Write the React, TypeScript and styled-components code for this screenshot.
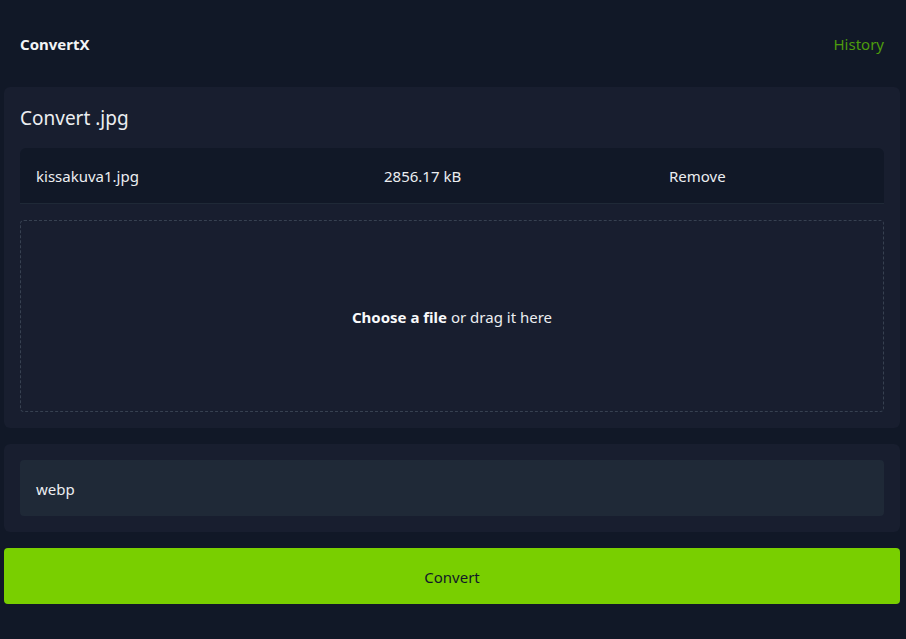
import { createGlobalStyle } from 'styled-components';
import styled from 'styled-components';

const GlobalStyle = createGlobalStyle`
  html, body {
    margin: 0;
    padding: 0;
    background: #111827;
  }
  body {
    font-family: "Noto Sans", "Open Sans", sans-serif;
    color: #e5e7eb;
    font-size: 16px;
  }
  * { box-sizing: border-box; }
`;

const Page = styled.div`
  min-height: 639px;
  background: #111827;
`;

const Header = styled.header`
  display: flex;
  align-items: center;
  justify-content: space-between;
  height: 87px;
  padding: 1px 22px 0 20px;
`;

const Brand = styled.span`
  font-weight: 700;
  font-size: 15px;
  color: #f3f4f6;
`;

const NavLink = styled.a`
  color: #4d9c0d;
  font-size: 15px;
  text-decoration: none;
`;

const Main = styled.main`
  display: flex;
  flex-direction: column;
  gap: 16px;
  padding: 0 6px 0 4px;
`;

const Panel = styled.section`
  background: #181e2f;
  border-radius: 6px;
  padding: 16px;
  display: flex;
  flex-direction: column;
  gap: 16px;
`;

const Title = styled.h1`
  margin: 0;
  padding-top: 2px;
  font-size: 19px;
  font-weight: 400;
  line-height: 27px;
  color: #eceef1;
`;

const FileTable = styled.div`
  background: #111827;
  border-radius: 6px 6px 0 0;
  border-bottom: 1px solid #1f2937;
  display: grid;
  grid-template-columns: 348px 285px 1fr;
  height: 56px;
  align-items: center;
  padding-top: 1px;
`;

const Cell = styled.div`
  padding: 0 16px;
  color: #eceef1;
  font-size: 15px;
`;

const DropZone = styled.div`
  height: 192px;
  border: 1px dashed #374151;
  border-radius: 4px;
  display: flex;
  align-items: center;
  justify-content: center;
  font-size: 15px;
  color: #eceef1;
  padding-top: 1px;
`;

const Strong = styled.b`
  font-weight: 700;
  color: #f9fafb;
`;

const Select = styled.div`
  height: 56px;
  background: #1f2937;
  border-radius: 4px;
  display: flex;
  align-items: center;
  padding: 2px 16px 0;
  font-size: 15px;
  color: #eceef1;
`;

const ConvertButton = styled.button`
  height: 56px;
  width: 100%;
  border: none;
  border-radius: 4px;
  background: #79cf00;
  color: #111827;
  font-family: inherit;
  font-size: 15px;
  padding-top: 2px;
`;

export default function App() {
  return (
    <Page>
      <GlobalStyle />
      <Header>
        <Brand>ConvertX</Brand>
        <NavLink href="#">History</NavLink>
      </Header>
      <Main>
        <Panel>
          <Title>Convert .jpg</Title>
          <div>
            <FileTable>
              <Cell>kissakuva1.jpg</Cell>
              <Cell>2856.17 kB</Cell>
              <Cell>Remove</Cell>
            </FileTable>
          </div>
          <DropZone>
            <span><Strong>Choose a file</Strong> or drag it here</span>
          </DropZone>
        </Panel>
        <Panel>
          <Select>webp</Select>
        </Panel>
        <ConvertButton>Convert</ConvertButton>
      </Main>
    </Page>
  );
}
